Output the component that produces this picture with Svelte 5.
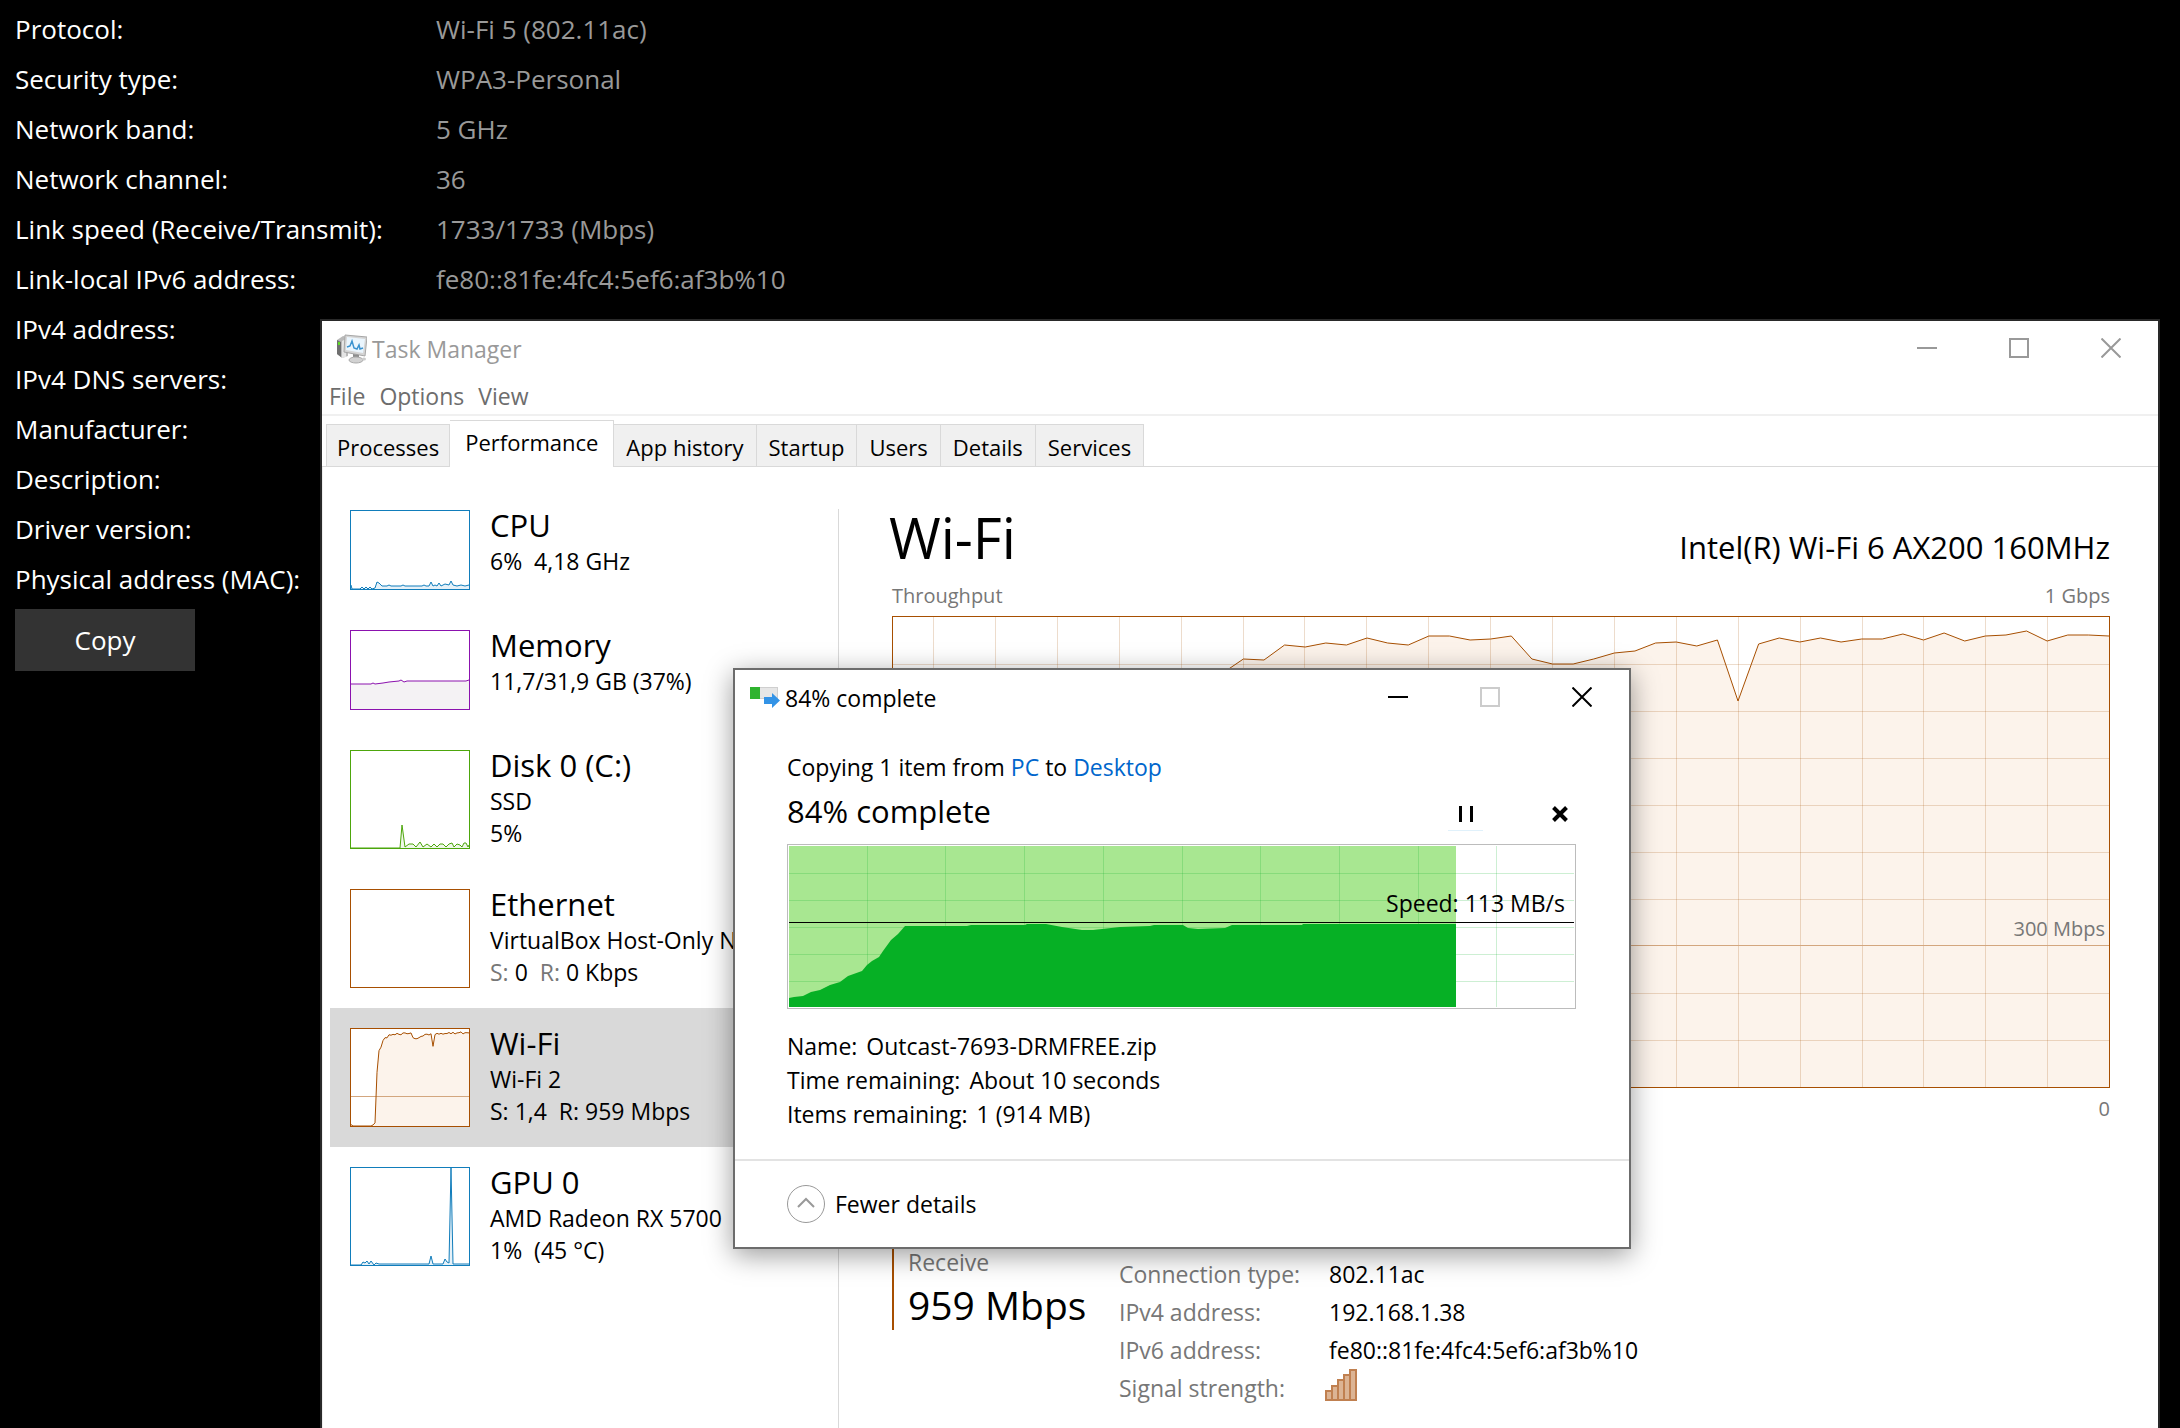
<script lang="ts">
	interface Resource {
		name: string;
		lines: string[];
		kind: string;
		points: number[][];
		selected?: boolean;
	}

	const properties = [
		['Protocol:', 'Wi-Fi 5 (802.11ac)'],
		['Security type:', 'WPA3-Personal'],
		['Network band:', '5 GHz'],
		['Network channel:', '36'],
		['Link speed (Receive/Transmit):', '1733/1733 (Mbps)'],
		['Link-local IPv6 address:', 'fe80::81fe:4fc4:5ef6:af3b%10'],
		['IPv4 address:', '192.168.1.38'],
		['IPv4 DNS servers:', ''],
		['Manufacturer:', ''],
		['Description:', ''],
		['Driver version:', ''],
		['Physical address (MAC):', '']
	];

	const menus = ['File', 'Options', 'View'];
	const tabs = ['Processes', 'Performance', 'App history', 'Startup', 'Users', 'Details', 'Services'];
	let activeTab = $state('Performance');

	// One sample per second, measured down from the top of a 470 high chart
	const throughput = [
		463, 470, 470, 470, 470, 470, 470, 470, 470, 470, 470, 465, 455, 210, 105, 88, 56, 42, 43, 28, 30,
		26, 28, 21, 26, 28, 19, 19, 23, 22, 19, 42, 47, 47, 42, 36, 34, 26, 25, 29, 23, 84, 27, 21, 25, 21,
		25, 22, 22, 17, 23, 16, 24, 19, 18, 14, 24, 18, 18, 19
	];
	const throughputPoints = throughput.map((y, i) => [(i * 1216) / 59, y]);
	const wifiThumb = throughput.map((y, i) => [i * 2, (y * 97) / 470]);

	const resources: Resource[] = [
		{
			name: 'CPU',
			lines: ['6%  4,18 GHz'],
			kind: 'cpu',
			points: [
				[0, 74], [1, 78], [9, 78], [11, 76], [13, 78], [15, 76], [17, 78], [19, 76], [21, 78], [24, 77],
				[26, 71], [28, 72], [31, 75], [36, 75], [38, 74], [40, 75], [50, 75], [52, 74], [54, 75], [71, 75],
				[73, 74], [75, 75], [78, 75], [80, 71], [82, 75], [84, 74], [86, 75], [88, 72], [90, 75], [94, 73],
				[98, 74], [100, 70], [102, 74], [106, 75], [110, 74], [114, 75], [118, 74]
			]
		},
		{
			name: 'Memory',
			lines: ['11,7/31,9 GB (37%)'],
			kind: 'memory',
			points: [[0, 53], [20, 53], [22, 52], [24, 53], [32, 52], [38, 51], [48, 50], [50, 49], [53, 51], [56, 50], [115, 50], [118, 49]]
		},
		{
			name: 'Disk 0 (C:)',
			lines: ['SSD', '5%'],
			kind: 'disk',
			points: [
				[0, 97], [49, 97], [51, 74], [54, 96], [58, 93], [62, 93], [65, 96], [69, 91], [72, 96], [76, 93],
				[80, 96], [83, 93], [86, 96], [89, 93], [92, 93], [95, 96], [98, 93], [101, 92], [103, 96],
				[106, 93], [109, 94], [111, 96], [113, 92], [115, 92], [117, 96], [118, 94]
			]
		},
		{
			name: 'Ethernet',
			lines: ['VirtualBox Host-Only Network', 'S: 0  R: 0 Kbps'],
			kind: 'network',
			points: []
		},
		{
			name: 'Wi-Fi',
			lines: ['Wi-Fi 2', 'S: 1,4  R: 959 Mbps'],
			kind: 'network',
			points: wifiThumb,
			selected: true
		},
		{
			name: 'GPU 0',
			lines: ['AMD Radeon RX 5700', '1%  (45 °C)'],
			kind: 'cpu',
			points: [
				[0, 97], [10, 97], [12, 94], [14, 95], [16, 93], [18, 96], [20, 93], [23, 97], [25, 95], [28, 96],
				[78, 96], [80, 88], [82, 96], [92, 96], [94, 91], [96, 94], [98, 95], [100, 0], [102, 96], [118, 96]
			]
		}
	];

	const gridColumns = Array.from({ length: 19 }, (_, i) => Math.round(40 + i * 61.9));
	const gridRows = [47, 94, 141, 188, 235, 282, 376, 423];

	const copyColumns = [78, 156, 235, 314, 393, 471, 550, 629, 707];
	const copyRows = [27, 54, 81, 108, 135];
	const copySpeed = [
		[0, 152], [5, 151], [14, 150], [22, 146], [31, 144], [41, 139], [51, 136], [59, 130], [73, 125],
		[78, 119], [83, 115], [90, 111], [94, 105], [102, 94], [109, 88], [116, 80], [178, 80], [182, 79],
		[236, 79], [238, 78], [257, 78], [273, 81], [293, 84], [304, 84], [331, 81], [361, 80], [365, 79],
		[394, 79], [399, 82], [409, 83], [436, 82], [443, 79], [513, 79], [514, 78], [667, 78]
	];

	const copyDetails = [
		['Name:', 'Outcast-7693-DRMFREE.zip'],
		['Time remaining:', 'About 10 seconds'],
		['Items remaining:', '1 (914 MB)']
	];

	function toLine(points: number[][]) {
		return points.map((p) => p.join(',')).join(' ');
	}

	function toArea(points: number[][], bottom: number) {
		const last = points[points.length - 1];
		return `0,${bottom} ${toLine(points)} ${last[0]},${bottom}`;
	}
</script>

{#snippet windowButtons(maxDisabled: boolean)}
	<div class="window-buttons">
		<button aria-label="Minimize">
			<svg width="20" height="20" viewBox="0 0 20 20"><path d="M0 10H20" /></svg>
		</button>
		<button aria-label="Maximize" disabled={maxDisabled}>
			<svg width="20" height="20" viewBox="0 0 20 20"><path d="M1 1H19V19H1Z" /></svg>
		</button>
		<button aria-label="Close">
			<svg width="20" height="20" viewBox="0 0 20 20"><path d="M0.5 0.5L19.5 19.5M19.5 0.5L0.5 19.5" /></svg>
		</button>
	</div>
{/snippet}

<main class="desktop">
	<section class="properties">
		<dl>
			{#each properties as [label, value]}
				<dt>{label}</dt>
				<dd>{value}</dd>
			{/each}
		</dl>
		<button class="copy">Copy</button>
	</section>

	<section class="task-manager">
		<header class="titlebar inactive">
			<svg class="app-icon" width="30" height="30" viewBox="0 0 30 30">
				<path d="M0 6L6 2L11 3V22L5 24L0 20Z" fill="#b9b9b9" />
				<path d="M0 6L4 8V23L0 20Z" fill="#6f6f6f" />
				<path d="M5 7L9 5V23L5 24Z" fill="#e4e4e4" />
				<rect x="1" y="8" width="2" height="3" fill="#5fdc27" />
				<path d="M8 1L30 3L28 22L7 18Z" fill="#d5d5d5" stroke="#a6a6a6" />
				<path d="M10 3L28 5L26 19L9 16Z" fill="#eaf5fd" />
				<path d="M10 13L13 12L15 7L17 14L20 15L22 11L23 15L26 14" fill="none" stroke="#3a92cf" stroke-width="1.5" />
				<path d="M16 20L22 21V24L16 23Z" fill="#8d8d8d" />
				<ellipse cx="19" cy="26" rx="7" ry="3" fill="#d2d2d2" stroke="#aaa" />
				<ellipse cx="27" cy="25" rx="2" ry="1.5" fill="#ccc" />
			</svg>
			<span class="title">Task Manager</span>
			{@render windowButtons(false)}
		</header>

		<nav class="menubar">
			{#each menus as menu}
				<button>{menu}</button>
			{/each}
		</nav>

		<div class="tabs" role="tablist">
			{#each tabs as tab}
				<button
					role="tab"
					class:active={activeTab === tab}
					aria-selected={activeTab === tab}
					onclick={() => (activeTab = tab)}
				>
					{tab}
				</button>
			{/each}
		</div>

		<div class="content">
			<div class="sidebar">
				{#each resources as item}
					{@const height = item.lines.length > 1 ? 97 : 78}
					<button class="resource {item.kind}" class:selected={item.selected}>
						<svg class="thumb" width="120" height={height + 2} viewBox="-1 -1 120 {height + 2}">
							<rect class="frame" x="-0.5" y="-0.5" width="119" height={height + 1} />
							{#if item.points.length}
								<polygon class="area" points={toArea(item.points, height)} />
								{#if item.selected}
									<path class="mark" d="M0 67.5H118" />
								{/if}
								<polyline class="line" points={toLine(item.points)} />
							{/if}
						</svg>
						<span class="info">
							<span class="name">{item.name}</span>
							{#each item.lines as line}
								{#if item.name === 'Ethernet' && line.startsWith('S:')}
									<span class="sub"><i>S:</i> 0&nbsp; <i>R:</i> 0 Kbps</span>
								{:else}
									<span class="sub">{line}</span>
								{/if}
							{/each}
						</span>
					</button>
				{/each}
			</div>

			<div class="details">
				<div class="heading">
					<h1>Wi-Fi</h1>
					<span class="adapter">Intel(R) Wi-Fi 6 AX200 160MHz</span>
				</div>
				<div class="scale top">
					<span>Throughput</span>
					<span>1 Gbps</span>
				</div>
				<div class="chart">
					<svg viewBox="0 0 1216 470" preserveAspectRatio="none">
						<polygon class="area" points={toArea(throughputPoints, 470)} />
						<g class="grid">
							{#each gridColumns as x}
								<path d="M{x}.5 0V470" />
							{/each}
							{#each gridRows as y}
								<path d="M0 {y}.5H1216" />
							{/each}
						</g>
						<path class="mark" d="M0 328.5H1216" />
						<polyline class="line" points={toLine(throughputPoints)} />
					</svg>
					<span class="mark-label">300 Mbps</span>
				</div>
				<div class="scale bottom">
					<span>0</span>
				</div>

				<div class="stats">
					<div class="receive">
						<span class="label">Receive</span>
						<span class="value">959 Mbps</span>
					</div>
					<dl>
						<dt>Connection type:</dt>
						<dd>802.11ac</dd>
						<dt>IPv4 address:</dt>
						<dd>192.168.1.38</dd>
						<dt>IPv6 address:</dt>
						<dd>fe80::81fe:4fc4:5ef6:af3b%10</dd>
						<dt>Signal strength:</dt>
						<dd>
							<svg class="signal" width="32" height="32" viewBox="0 0 32 32">
								<path d="M1 31V22H7V31ZM7 31V17H13V31ZM13 31V11H19V31ZM19 31V6H25V31ZM25 31V1H31V31Z" />
							</svg>
						</dd>
					</dl>
				</div>
			</div>
		</div>
	</section>

	<section class="copy-dialog">
		<header class="titlebar">
			<svg class="app-icon" width="30" height="22" viewBox="0 0 30 22">
				<rect x="0.5" y="0.5" width="27" height="11" fill="#e6e6e6" stroke="#cfcfcf" />
				<rect x="0" y="0" width="10" height="12" fill="#2fb32f" />
				<path d="M14 10H22V6L30 13.5L22 21V17H14Z" fill="#3393e6" />
			</svg>
			<span class="title">84% complete</span>
			{@render windowButtons(true)}
		</header>

		<div class="copy-body">
			<p class="summary">Copying 1 item from <a href="#pc">PC</a> to <a href="#desktop">Desktop</a></p>
			<div class="progress-row">
				<h2>84% complete</h2>
				<div class="actions">
					<button class="pause" aria-label="Pause">
						<svg width="16" height="16" viewBox="0 0 16 16"><path d="M2.5 0V16M13.5 0V16" stroke-width="3" /></svg>
					</button>
					<button aria-label="Cancel">
						<svg width="16" height="16" viewBox="0 0 16 16"><path d="M1.5 1.5L14.5 14.5M14.5 1.5L1.5 14.5" stroke-width="4" /></svg>
					</button>
				</div>
			</div>

			<div class="speed-chart">
				<svg viewBox="0 0 785 161" preserveAspectRatio="none">
					<rect class="done" x="0" y="0" width="667" height="161" />
					<g class="grid">
						{#each copyColumns as x}
							<path d="M{x}.5 0V161" />
						{/each}
						{#each copyRows as y}
							<path d="M0 {y}.5H785" />
						{/each}
					</g>
					<polygon class="speed" points={toArea(copySpeed, 161)} />
					<path class="current" d="M0 76.5H785" />
				</svg>
				<span class="speed-label">Speed: 113 MB/s</span>
			</div>

			<ul class="copy-details">
				{#each copyDetails as [label, value]}
					<li><span>{label}</span><span>{value}</span></li>
				{/each}
			</ul>
		</div>

		<footer>
			<button class="fewer">
				<svg width="38" height="38" viewBox="0 0 38 38">
					<circle cx="19" cy="19" r="18.5" />
					<path d="M11 22L19 14L27 22" stroke-width="2" />
				</svg>
				Fewer details
			</button>
		</footer>
	</section>
</main>

<style>
	:global(body) {
		background: #000;
		font-family: 'Open Sans', 'Noto Sans', sans-serif;
		font-size: 23px;
		color: #000;
	}

	.desktop {
		position: relative;
		min-height: 100vh;
		overflow: hidden;
	}

	button {
		margin: 0;
		padding: 0;
		border: none;
		background: none;
		font: inherit;
		color: inherit;
	}

	dl,
	dd,
	h1,
	h2,
	p,
	ul {
		margin: 0;
		padding: 0;
		font-weight: 400;
	}

	svg {
		display: block;
		fill: none;
	}

	/* Network properties */
	.properties {
		padding: 4px 15px;
		font-size: 26px;
		color: #fff;
	}

	.properties dl {
		display: grid;
		grid-template-columns: 421px 1fr;
		grid-auto-rows: 50px;
		line-height: 50px;
	}

	.properties dd {
		color: #999;
	}

	.copy {
		width: 180px;
		height: 62px;
		margin-top: 5px;
		background: #333;
	}

	/* Window chrome */
	.titlebar {
		display: flex;
		align-items: center;
		height: 56px;
		padding-left: 15px;
	}

	.title {
		flex: 1;
		margin-left: 5px;
	}

	.window-buttons {
		display: flex;
		height: 100%;
	}

	.window-buttons button {
		display: grid;
		place-items: center;
		width: 92px;
		padding: 0 2px 2px 0;
	}

	.window-buttons svg {
		stroke: currentColor;
		stroke-width: 2;
	}

	.window-buttons button:disabled {
		color: #ccc;
	}

	.inactive {
		color: #999;
	}

	/* Task Manager */
	.task-manager {
		position: absolute;
		top: 319px;
		right: 20px;
		bottom: 0;
		left: 320px;
		display: flex;
		flex-direction: column;
		border: 2px solid rgba(255, 255, 255, 0.16);
		border-bottom: none;
		background: #fff;
		background-clip: padding-box;
		overflow: hidden;
	}

	.menubar {
		display: flex;
		gap: 14px;
		height: 37px;
		padding-left: 7px;
		border-bottom: 2px solid #f0f0f0;
		color: #6d6d6d;
	}

	.tabs {
		display: flex;
		align-items: flex-end;
		height: 50px;
		padding-left: 4px;
		border-bottom: 1px solid #d9d9d9;
		font-size: 22px;
	}

	.tabs button {
		height: 42px;
		padding: 2px 10px 0;
		border: 1px solid #d9d9d9;
		border-bottom: none;
		border-left: none;
		background: #f0f0f0;
	}

	.tabs button:first-child {
		border-left: 1px solid #d9d9d9;
	}

	.tabs button.active {
		height: 47px;
		margin-bottom: -1px;
		padding: 0 15px 4px;
		background: #fff;
	}

	.tabs button.active ~ button {
		padding: 2px 12px 0;
	}

	.content {
		display: flex;
		flex: 1;
		border-left: 1px solid #eee;
	}

	.sidebar {
		flex: 0 0 515px;
		padding-top: 23px;
	}

	.resource {
		display: flex;
		align-items: flex-start;
		width: 100%;
		padding: 20px;
		border-left: 7px solid #fff;
		text-align: left;
		white-space: nowrap;
		overflow: hidden;
	}

	.resource.selected {
		background: #d9d9d9;
	}

	.thumb {
		flex: none;
	}

	.frame {
		fill: #fff;
		stroke: currentColor;
	}

	.thumb .line,
	.chart .line {
		stroke: currentColor;
		stroke-width: 1;
	}

	.cpu .thumb {
		color: #117dbb;
	}

	.memory .thumb {
		color: #8b12ae;
	}

	.disk .thumb {
		color: #4da60c;
	}

	.network .thumb,
	.chart {
		color: #a74f01;
	}

	.cpu .area {
		fill: #e6f1f8;
	}

	.memory .area {
		fill: #f4f2f4;
	}

	.disk .area {
		fill: #eff7e9;
	}

	.network .area,
	.chart .area {
		fill: #fcf3eb;
	}

	.mark {
		stroke: #d3a67e;
	}

	.info {
		display: flex;
		flex-direction: column;
		margin-left: 20px;
	}

	.name {
		margin-bottom: 5px;
		font-size: 31px;
		line-height: 30px;
	}

	.sub {
		line-height: 32px;
		white-space: pre;
	}

	.sub i {
		font-style: normal;
		color: #777;
	}

	.details {
		flex: 1;
		margin-top: 42px;
		padding: 0 48px 0 53px;
		border-left: 1px solid #d9d9d9;
	}

	.heading {
		display: flex;
		justify-content: space-between;
		align-items: baseline;
		height: 56px;
		margin-bottom: 17px;
		line-height: 56px;
	}

	h1 {
		margin-left: -3px;
		font-size: 56px;
	}

	.adapter {
		font-size: 31px;
	}

	.scale {
		display: flex;
		justify-content: space-between;
		font-size: 20px;
		line-height: 28px;
		color: #777;
	}

	.top {
		margin-bottom: 6px;
	}

	.bottom {
		justify-content: flex-end;
		margin-top: 7px;
	}

	.chart {
		position: relative;
		height: 470px;
		border: 1px solid currentColor;
	}

	.chart svg,
	.speed-chart svg {
		width: 100%;
		height: 100%;
	}

	.chart .grid {
		stroke: rgba(167, 79, 1, 0.2);
	}

	.grid,
	.mark,
	.current {
		shape-rendering: crispEdges;
	}

	.mark-label {
		position: absolute;
		right: 4px;
		bottom: 144px;
		font-size: 20px;
		line-height: 28px;
		color: #777;
	}

	.stats {
		display: flex;
		margin-top: 117px;
	}

	.receive {
		display: flex;
		flex-direction: column;
		width: 211px;
		height: 86px;
		padding: 4px 0 0 14px;
		border-left: 2px solid #a74f01;
	}

	.receive .label {
		line-height: 36px;
		color: #777;
	}

	.receive .value {
		font-size: 39px;
		line-height: 50px;
	}

	.stats dl {
		display: grid;
		grid-template-columns: 210px 1fr;
		grid-auto-rows: 38px;
		margin-top: 15px;
		line-height: 38px;
	}

	.stats dt {
		color: #777;
	}

	.signal {
		margin-left: -4px;
		fill: #dcb494;
		stroke: #c08050;
		stroke-width: 2;
	}

	/* Copy dialog */
	.copy-dialog {
		position: absolute;
		top: 668px;
		left: 733px;
		width: 894px;
		border: 2px solid #6c6c6c;
		background: #fff;
		box-shadow: 0 6px 26px rgba(0, 0, 0, 0.4);
	}

	.copy-body {
		padding: 24px 53px 28px 52px;
	}

	.summary {
		line-height: 34px;
	}

	a {
		color: #0066cc;
		text-decoration: none;
	}

	.progress-row {
		display: flex;
		justify-content: space-between;
		margin: 5px 0 11px;
	}

	h2 {
		font-size: 31px;
		line-height: 44px;
	}

	.actions {
		display: flex;
		gap: 59px;
		margin-right: -1px;
	}

	.actions button {
		display: grid;
		place-items: center;
		width: 35px;
		height: 42px;
		padding-top: 8px;
		box-sizing: border-box;
	}

	.actions svg {
		stroke: #000;
	}

	.actions .pause {
		border-bottom: 1px solid #e0f1fb;
	}

	.speed-chart {
		position: relative;
		height: 161px;
		padding: 1px;
		border: 1px solid #bcbcbc;
	}

	.done {
		fill: #a8e791;
	}

	.speed {
		fill: #06b025;
	}

	.speed-chart .grid {
		stroke: rgba(6, 176, 37, 0.2);
	}

	.current {
		stroke: #000;
	}

	.speed-label {
		position: absolute;
		top: 41px;
		right: 10px;
		line-height: 34px;
	}

	.copy-details {
		margin-top: 20px;
		list-style: none;
		line-height: 34px;
	}

	.copy-details li {
		display: flex;
		gap: 9px;
	}

	footer {
		display: flex;
		align-items: center;
		height: 86px;
		padding-left: 52px;
		border-top: 2px solid #e3e3e3;
	}

	.fewer {
		display: flex;
		align-items: center;
		gap: 10px;
	}

	.fewer svg {
		stroke: #999;
	}
</style>
